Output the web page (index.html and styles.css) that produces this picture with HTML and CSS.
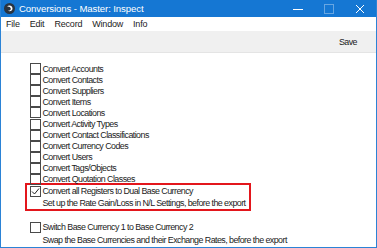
FILE: index.html
```html
<!DOCTYPE html>
<html lang="en">
<head>
    <meta charset="UTF-8" />
    <title>Conversions - Master: Inspect</title>
    <link rel="stylesheet" href="styles.css">
</head>
<body>
    <div class="window">
        <div class="titlebar">
            <svg class="app-icon" width="11" height="11" viewBox="0 0 11 11">
                <circle cx="5.5" cy="5.5" r="5.5" fill="#2a3440" />
                <path d="M3 3.5 C5 1.8 8.5 2.5 8.5 5.5 C8.5 8 5.5 9 3.8 7.5 C5.5 8 7 7 6.8 5.5 C6.6 4 4.8 3.2 3 3.5 Z" fill="#fff" />
            </svg>
            <span class="title">Conversions - Master: Inspect</span>
            <div class="controls">
                <svg width="10" height="10" viewBox="0 0 10 10"><path d="M0 5.5 H10" stroke="#fff" stroke-width="1" /></svg>
                <svg class="disabled" width="10" height="10" viewBox="0 0 10 10"><rect x="0.5" y="0.5" width="9" height="9" fill="none" stroke="#fff" stroke-width="1" /></svg>
                <svg width="10" height="10" viewBox="0 0 10 10"><path d="M1 1 L9 9 M9 1 L1 9" stroke="#fff" stroke-width="1" /></svg>
            </div>
        </div>
        <div class="menubar">
            <span>File</span>
            <span>Edit</span>
            <span>Record</span>
            <span>Window</span>
            <span>Info</span>
        </div>
        <div class="toolbar">
            <span class="save">Save</span>
        </div>
        <div class="content">
            <div class="row"><span class="box"></span>Convert Accounts</div>
            <div class="row"><span class="box"></span>Convert Contacts</div>
            <div class="row"><span class="box"></span>Convert Suppliers</div>
            <div class="row"><span class="box"></span>Convert Items</div>
            <div class="row"><span class="box"></span>Convert Locations</div>
            <div class="row"><span class="box"></span>Convert Activity Types</div>
            <div class="row"><span class="box"></span>Convert Contact Classifications</div>
            <div class="row"><span class="box"></span>Convert Currency Codes</div>
            <div class="row"><span class="box"></span>Convert Users</div>
            <div class="row"><span class="box"></span>Convert Tags/Objects</div>
            <div class="row"><span class="box"></span>Convert Quotation Classes</div>
            <div class="highlight">
                <div class="row"><span class="box">
                    <svg width="9" height="9" viewBox="0 0 9 9"><path d="M1 4.5 L3.5 7 L8 1.5" fill="none" stroke="#222" stroke-width="1" /></svg>
                </span>Convert all Registers to Dual Base Currency</div>
                <div class="note">Set up the Rate Gain/Loss in N/L Settings, before the export</div>
            </div>
            <div class="group">
                <div class="row"><span class="box"></span>Switch Base Currency 1 to Base Currency 2</div>
                <div class="note">Swap the Base Currencies and their Exchange Rates, before the export</div>
            </div>
        </div>
    </div>
</body>
</html>
```

FILE: styles.css
```css
body {
    margin: 0;
    font-family: "Liberation Sans", Arial, sans-serif;
    font-size: 8.9px;
    letter-spacing: -0.55px;
    color: #1b1b1b;
}
.window {
    width: 377px;
    height: 248px;
    box-sizing: border-box;
    border: 1px solid #2b83d6;
    border-top: none;
    background: #fff;
    overflow: hidden;
    white-space: nowrap;
}
.titlebar {
    display: flex;
    align-items: center;
    height: 17px;
    background: #1577d3;
    color: #fff;
    padding-left: 3px;
}
.app-icon {
    margin-right: 4px;
}
.title {
    font-size: 9.6px;
    letter-spacing: -0.1px;
}
.controls {
    margin-left: auto;
    display: flex;
    gap: 21px;
    padding-right: 11px;
}
.controls .disabled {
    opacity: 0.35;
}
.menubar {
    display: flex;
    gap: 10px;
    height: 14px;
    align-items: center;
    padding-left: 5px;
    font-size: 9px;
    letter-spacing: -0.2px;
}
.toolbar {
    display: flex;
    justify-content: flex-end;
    align-items: center;
    height: 21px;
    background: #f0f0f0;
    border-bottom: 1px solid #e4e4e4;
    padding-right: 19px;
}
.content {
    padding: 10px 0 0 29px;
}
.row {
    display: flex;
    align-items: center;
    height: 11.1px;
}
.box {
    width: 9px;
    height: 9px;
    border: 1px solid #4a4a4a;
    margin-right: 1.5px;
    flex-shrink: 0;
    display: flex;
    align-items: center;
    justify-content: center;
}
.highlight {
    width: 219px;
    height: 24px;
    margin: -2px 0 0 -5px;
    padding: 0 0 0 3px;
    border: 2px solid #e3161c;
}
.highlight .row {
    height: 12px;
}
.note {
    margin-left: 12.5px;
    height: 12px;
    line-height: 12px;
}
.group {
    margin-top: 10px;
}
.group .row {
    height: 12px;
}
.group .note {
    margin-top: 1px;
}
```
